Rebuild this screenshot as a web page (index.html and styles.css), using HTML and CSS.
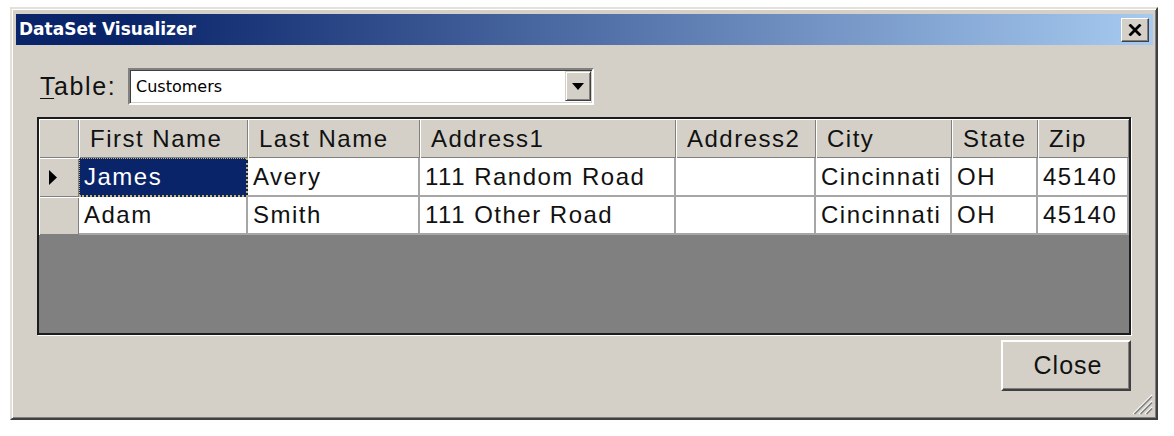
FILE: index.html
```html
<!DOCTYPE html>
<html>
<head>
<meta charset="utf-8">
<title>DataSet Visualizer</title>
<link rel="stylesheet" href="styles.css">
</head>
<body>
<div class="window">
  <div class="titlebar">
    <span class="title">DataSet Visualizer</span>
    <div class="xbtn">
      <svg width="14" height="12" viewBox="0 0 14 12"><path d="M1.5 0.5 L12.5 11.5 M12.5 0.5 L1.5 11.5" stroke="#000" stroke-width="2.8" fill="none"/></svg>
    </div>
  </div>
  <div class="content">
    <div class="table-row">
      <label class="tlabel"><u>T</u>able:</label>
      <div class="combo">
        <span class="combo-text">Customers</span>
        <div class="combo-btn">
          <svg width="12" height="7" viewBox="0 0 12 7"><path d="M0 0 H12 L6 7 Z" fill="#000"/></svg>
        </div>
      </div>
    </div>
    <div class="grid">
      <div class="rh hdr"></div>
      <div class="hc">First Name</div>
      <div class="hc">Last Name</div>
      <div class="hc">Address1</div>
      <div class="hc">Address2</div>
      <div class="hc">City</div>
      <div class="hc">State</div>
      <div class="hc">Zip</div>

      <div class="rh r1"><svg width="9" height="15" viewBox="0 0 9 15"><path d="M0 0 L8 7.5 L0 15 Z" fill="#000"/></svg></div>
      <div class="dc r1 sel">James</div>
      <div class="dc r1">Avery</div>
      <div class="dc r1">111 Random Road</div>
      <div class="dc r1"></div>
      <div class="dc r1">Cincinnati</div>
      <div class="dc r1">OH</div>
      <div class="dc r1">45140</div>

      <div class="rh r2"></div>
      <div class="dc r2">Adam</div>
      <div class="dc r2">Smith</div>
      <div class="dc r2">111 Other Road</div>
      <div class="dc r2"></div>
      <div class="dc r2">Cincinnati</div>
      <div class="dc r2">OH</div>
      <div class="dc r2">45140</div>

      <div class="empty"></div>
    </div>
    <div class="footer">
      <div class="btn">Close</div>
    </div>
  </div>
  <div class="grip">
    <svg width="22" height="22" viewBox="0 0 22 22">
      <path d="M21 2 L2 21" stroke="#ffffff" stroke-width="1.2"/>
      <path d="M21 3.5 L3.5 21" stroke="#808080" stroke-width="1.6"/>
      <path d="M21 8 L8 21" stroke="#ffffff" stroke-width="1.2"/>
      <path d="M21 9.5 L9.5 21" stroke="#808080" stroke-width="1.6"/>
      <path d="M21 14 L14 21" stroke="#ffffff" stroke-width="1.2"/>
      <path d="M21 15.5 L15.5 21" stroke="#808080" stroke-width="1.6"/>
    </svg>
  </div>
</div>
</body>
</html>
```
FILE: styles.css
```css
html, body {
  margin: 0;
  padding: 0;
  background: #ffffff;
}
body {
  font-family: "Liberation Sans", Arial, sans-serif;
  color: #000;
}
.window {
  position: relative;
  margin: 7px 0 0 10px;
  width: 1148px;
  height: 413px;
  box-sizing: border-box;
  background: #d4d0c8;
  border: 2px solid;
  border-color: #e4e1da #404040 #404040 #e4e1da;
  box-shadow: inset 1px 1px 0 #ffffff, inset -1px -1px 0 #808080;
  padding: 5px 3px 3px 4px;
  display: flex;
  flex-direction: column;
}
.titlebar {
  height: 31px;
  flex: none;
  background: linear-gradient(to right, #0a246a 0%, #0a246a 10%, #a6caf0 100%);
  display: flex;
  align-items: center;
  justify-content: space-between;
  padding: 0 4px 0 3px;
}
.title {
  color: #ffffff;
  font: bold 17px "DejaVu Sans", sans-serif;
  margin-top: -1px;
}
.xbtn {
  width: 28px;
  height: 24px;
  box-sizing: border-box;
  background: #d4d0c8;
  border: 1px solid;
  border-color: #ffffff #404040 #404040 #ffffff;
  box-shadow: inset -1px -1px 0 #808080;
  display: flex;
  align-items: center;
  justify-content: center;
}
.content {
  flex: 1;
  display: flex;
  flex-direction: column;
  padding: 23px 22px 0 21px;
}
.table-row {
  display: flex;
  align-items: center;
  height: 37px;
}
.tlabel {
  width: 91px;
  flex: none;
  padding-left: 3px;
  box-sizing: border-box;
  font-size: 25px;
  letter-spacing: 1.6px;
  color: #111;
}
.tlabel u {
  text-decoration: underline;
  text-underline-offset: 3px;
  text-decoration-thickness: 1px;
}
.combo {
  width: 466px;
  height: 37px;
  flex: none;
  box-sizing: border-box;
  background: #ffffff;
  border: 2px solid;
  border-color: #808080 #ffffff #ffffff #808080;
  box-shadow: inset 1px 1px 0 #404040, inset -1px -1px 0 #d4d0c8;
  display: flex;
  align-items: center;
  padding: 1px 1px 2px 6px;
}
.combo-text {
  flex: 1;
  font: 16px "DejaVu Sans", sans-serif;
}
.combo-btn {
  width: 26px;
  height: 30px;
  box-sizing: border-box;
  background: #d4d0c8;
  border: 1px solid;
  border-color: #d4d0c8 #404040 #404040 #d4d0c8;
  box-shadow: inset 1px 1px 0 #ffffff, inset -1px -1px 0 #808080;
  display: flex;
  align-items: center;
  justify-content: center;
}
.grid {
  margin-top: 12px;
  height: 218px;
  box-sizing: border-box;
  border: 2px solid #1c1c1c;
  box-shadow: 1px 1px 0 #ffffff;
  background: #808080;
  display: grid;
  grid-template-columns: 40px 169px 172px 256px 140px 136px 86px 91px;
  grid-template-rows: 39px 39px 38px 1fr;
  font-size: 24px;
  letter-spacing: 1.5px;
  color: #111;
}
.hc {
  background: #d4d0c8;
  box-shadow: inset 1px 1px 0 #ffffff, inset -1px -1px 0 #808080;
  display: flex;
  align-items: center;
  padding-left: 11px;
  white-space: nowrap;
  overflow: hidden;
}
.rh {
  background: #d4d0c8;
  box-shadow: inset 1px 1px 0 #ffffff, inset -1px -1px 0 #808080;
  display: flex;
  align-items: center;
  padding-left: 10px;
}
.dc {
  background: #ffffff;
  border-right: 2px solid #a6a6a6;
  border-bottom: 2px solid #a6a6a6;
  display: flex;
  align-items: center;
  padding-left: 5px;
  white-space: nowrap;
  overflow: hidden;
}
.dc.sel {
  background: #0a246a;
  color: #ffffff;
  border: 1px dotted #c8b46a;
  border-right: 2px dotted #c8b46a;
  border-bottom: 2px dotted #c8b46a;
  padding-left: 4px;
}
.empty {
  grid-column: 1 / -1;
}
.footer {
  display: flex;
  justify-content: flex-end;
  margin-top: 5px;
}
.btn {
  width: 130px;
  height: 51px;
  box-sizing: border-box;
  background: #d4d0c8;
  border: 2px solid;
  border-color: #ffffff #404040 #404040 #ffffff;
  box-shadow: inset -1px -1px 0 #808080;
  display: flex;
  align-items: center;
  justify-content: center;
  font-size: 25px;
  letter-spacing: 1px;
  padding-left: 4px;
  color: #111;
}
.grip {
  position: absolute;
  right: 3px;
  bottom: 3px;
  width: 22px;
  height: 22px;
}
```
